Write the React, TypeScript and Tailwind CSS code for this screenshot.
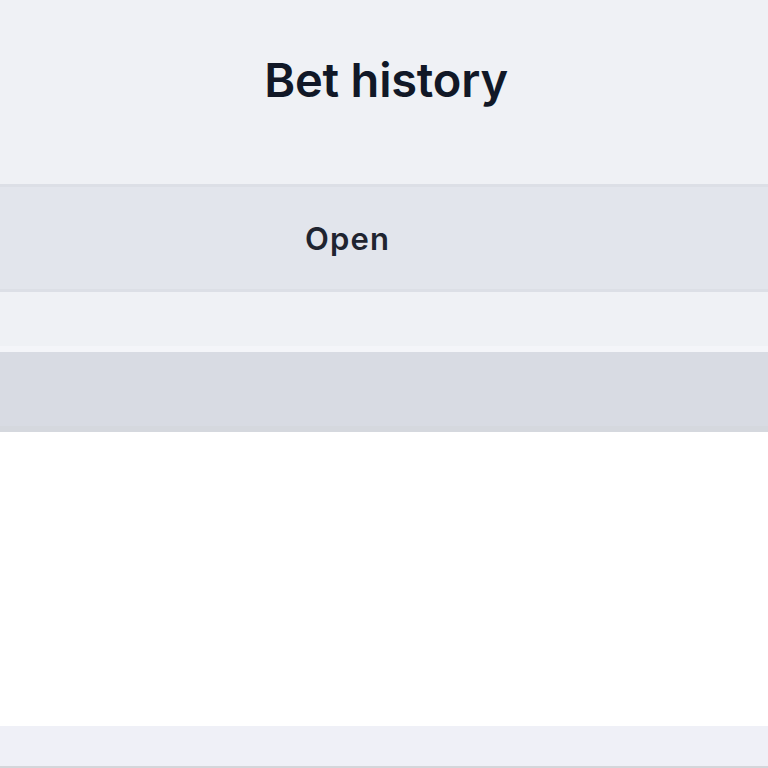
export default function App() {
  return (
    <div className="flex h-[768px] w-[768px] flex-col overflow-hidden bg-white font-['Inter',sans-serif] text-[#111827]">
      <header className="flex h-[184px] shrink-0 items-center justify-center bg-[#eff1f5] pt-[4px]">
        <h1 className="translate-x-[2px] -translate-y-[14px] text-[47px] font-semibold tracking-[-0.2px]">Bet history</h1>
      </header>
      <div className="flex h-[108px] shrink-0 items-center border-y-[3px] border-[#dcdfe6] bg-[#e2e5ec] pt-[3px]">
        <span className="ml-[305px] text-[31px] font-semibold tracking-[1.2px] text-[#1f2430]">Open</span>
      </div>
      <div className="h-[60px] shrink-0 border-b-[6px] border-[#f4f5f9] bg-[#eff1f5]" />
      <div className="h-[80px] shrink-0 border-b-[6px] border-[#d5d8de] bg-[#d8dbe3]" />
      <main className="flex-1 bg-white" />
      <footer className="h-[42px] shrink-0 border-b-[2px] border-[#d4d6da] bg-[#eff0f7]" />
    </div>
  );
}
